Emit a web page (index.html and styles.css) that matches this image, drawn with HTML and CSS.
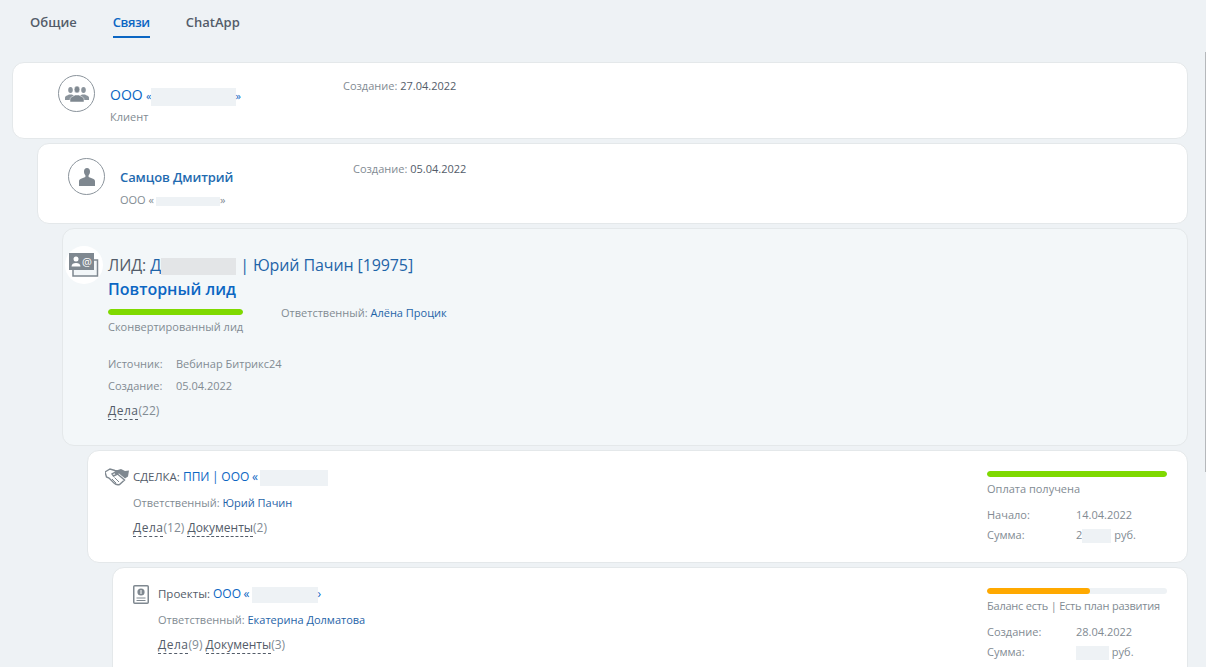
FILE: index.html
```html
<!DOCTYPE html>
<html lang="ru">
<head>
    <meta charset="UTF-8">
    <title>Связи</title>
    <link rel="stylesheet" href="styles.css">
</head>
<body>
    <div class="scroll-thumb"></div>

    <nav class="tabs">
        <a class="tab">Общие</a>
        <a class="tab tab-active">Связи</a>
        <a class="tab">ChatApp</a>
    </nav>

    <div class="tree">
        <!-- Клиент -->
        <section class="card card-client level-0">
            <div class="avatar">
                <svg viewBox="0 0 24 16" width="24" height="16">
                    <ellipse cx="5.500" cy="4" rx="2.300" ry="3" fill="#8b949c"/>
                    <ellipse cx="18.500" cy="4" rx="2.300" ry="3" fill="#8b949c"/>
                    <path d="M0 14v-2.500c0-1.500 2.500-2 4-3h3l3 2v3.500zM24 14v-2.500c0-1.500-2.500-2-4-3h-3l-3 2v3.500z" fill="#8b949c"/>
                    <ellipse cx="12" cy="3.500" rx="2.800" ry="3.500" fill="#7f8890" stroke="#fff" stroke-width=".5"/>
                    <path d="M5 16v-3c0-2 3.500-2.500 5-4h4c1.500 1.500 5 2 5 4v3z" fill="#7f8890" stroke="#fff" stroke-width=".5"/>
                </svg>
            </div>
            <div class="who">
                <div class="who-name"><a class="link link-org">ООО</a> <a class="link small">«<span class="blur blur-a"></span>»</a></div>
                <div class="who-sub">Клиент</div>
            </div>
            <div class="created">Создание: <b>27.04.2022</b></div>
        </section>

        <!-- Контакт -->
        <section class="card card-contact level-1">
            <div class="avatar">
                <svg viewBox="0 0 16 18" width="16" height="18">
                    <path d="M8 0c1.900 0 3 1.400 3 3.500 0 1.700-.6 3-1.400 3.800v1.700l4.400 1.800c1.300.6 2 1.400 2 2.700v4.500H0v-4.500c0-1.300.7-2.100 2-2.700l4.400-1.800V7.300C5.600 6.500 5 5.200 5 3.500 5 1.400 6.100 0 8 0z" fill="#7f8890"/>
                </svg>
            </div>
            <div class="who">
                <div class="who-name"><a class="link link-bold">Самцов Дмитрий</a></div>
                <div class="who-sub">ООО «<span class="blur blur-b"></span>»</div>
            </div>
            <div class="created">Создание: <b>05.04.2022</b></div>
        </section>

        <!-- Лид -->
        <section class="card card-lead level-2">
            <div class="lead-icon">
                <svg viewBox="0 0 30 24" width="30" height="24">
                    <path d="M4 7h24.500v16H4z" fill="#f3f7f9" stroke="#7f8890" stroke-width="1.500"/>
                    <rect x="0" y="0" width="25" height="17" fill="#7f8890"/>
                    <circle cx="7" cy="6" r="2.500" fill="#fff"/>
                    <path d="M2.500 13.500c0-2.500 2-3.500 4.500-3.500s4.500 1 4.500 3.500z" fill="#fff"/>
                    <text class="lead-at" x="13" y="13">@</text>
                </svg>
            </div>
            <div class="lead-body">
                <h2 class="lead-title">ЛИД: <a class="link-dark">Д<span class="blur blur-c"></span> | Юрий Пачин [19975]</a></h2>
                <div class="lead-repeat">Повторный лид</div>
                <div class="lead-status">
                    <div class="status-col">
                        <div class="bar"><div class="bar-fill bar-green" style="width: 100%"></div></div>
                        <div class="status-text">Сконвертированный лид</div>
                    </div>
                    <div class="owner">Ответственный: <a class="link-dark">Алёна Процик</a></div>
                </div>
                <dl class="facts">
                    <div class="fact"><dt>Источник:</dt><dd>Вебинар Битрикс24</dd></div>
                    <div class="fact"><dt>Создание:</dt><dd>05.04.2022</dd></div>
                </dl>
                <div class="actions"><span class="dashed">Дела</span><span class="count">(22)</span></div>
            </div>
        </section>

        <!-- Сделка -->
        <section class="card card-deal level-3">
            <svg class="deal-icon" viewBox="0 0 24 18" width="24" height="18">
                <path d="M0 4l5-3 5 1.500 2 .5-5 3 1.500 2 4-2 7 6-5 4.500c-2 .5-4 0-5.500-1.500L4 10 1.500 9z" fill="#fff" stroke="#7f8890" stroke-width="1.400"/>
                <path d="M11 2.500l5-1.500 4 2 4-.5-1 6-3 2-6-5-3 1.500-1.500-1.500z" fill="#7f8890"/>
                <path d="M7 11l4 4M9.500 9.500l4.500 4.500" stroke="#7f8890" stroke-width="1"/>
            </svg>
            <div class="deal-body">
                <div class="deal-title">СДЕЛКА: <a class="link link-title">ППИ | ООО «<span class="blur blur-d"></span></a></div>
                <div class="owner">Ответственный: <a class="link-dark">Юрий Пачин</a></div>
                <div class="actions"><span class="dashed">Дела</span><span class="count">(12)</span> <span class="dashed">Документы</span><span class="count">(2)</span></div>
            </div>
            <div class="deal-side">
                <div class="bar"><div class="bar-fill bar-green" style="width: 100%"></div></div>
                <div class="status-text">Оплата получена</div>
                <dl class="side-facts">
                    <div class="fact"><dt>Начало:</dt><dd>14.04.2022</dd></div>
                    <div class="fact"><dt>Сумма:</dt><dd>2<span class="blur blur-e"></span> руб.</dd></div>
                </dl>
            </div>
        </section>

        <!-- Проект -->
        <section class="card card-project level-4">
            <svg class="project-icon" viewBox="0 0 16 19" width="16" height="19">
                <rect x=".75" y=".75" width="14.500" height="17.500" rx="1" fill="#fff" stroke="#7f8890" stroke-width="1.500"/>
                <circle cx="8" cy="7" r="3.600" fill="#7f8890"/>
                <path d="M8 5v4" stroke="#fff" stroke-width="1"/>
                <path d="M3.500 13h9M3.500 15.500h9" stroke="#7f8890" stroke-width="1"/>
            </svg>
            <div class="deal-body">
                <div class="deal-title">Проекты: <a class="link link-title">ООО «<span class="blur blur-f"></span>›</a></div>
                <div class="owner">Ответственный: <a class="link-dark">Екатерина Долматова</a></div>
                <div class="actions"><span class="dashed">Дела</span><span class="count">(9)</span> <span class="dashed">Документы</span><span class="count">(3)</span></div>
            </div>
            <div class="deal-side">
                <div class="bar"><div class="bar-fill bar-orange" style="width: 57%"></div></div>
                <div class="status-text status-tight">Баланс есть | Есть план развития</div>
                <dl class="side-facts">
                    <div class="fact"><dt>Создание:</dt><dd>28.04.2022</dd></div>
                    <div class="fact"><dt>Сумма:</dt><dd><span class="blur blur-g"></span> руб.</dd></div>
                    <div class="fact"><dt>Закрытие:</dt><dd>30.04.2022</dd></div>
                </dl>
            </div>
        </section>
    </div>
</body>
</html>
```

FILE: styles.css
```css
html, body {
    height: 100%;
    overflow: hidden;
}

body {
    margin: 0;
    background-color: #eef2f5;
    font-family: "Open Sans", "Noto Sans", Arial, sans-serif;
    font-size: 11px;
    color: #828b93;
}

a {
    text-decoration: none;
}

/* Полоса прокрутки поверх страницы */
.scroll-thumb {
    position: fixed;
    top: 52px;
    right: 0;
    width: 1px;
    height: 420px;
    background-color: #b5b8bb;
}

/* Вкладки */
.tabs {
    display: flex;
    gap: 36px;
    padding: 13px 0 0 30px;
    height: 25px;
}

.tab {
    height: 25px;
    font-size: 13px;
    line-height: 18px;
    font-weight: 600;
    color: #535c69;
    box-sizing: border-box;
}

.tab-active {
    color: #0b66c3;
    letter-spacing: -0.4px;
    border-bottom: 2px solid #0b66c3;
}

/* Дерево связей */
.tree {
    display: flex;
    flex-direction: column;
    gap: 4px;
    margin-top: 24px;
    margin-right: 18px;
}

.card {
    display: flex;
    background-color: #ffffff;
    border: 1px solid #e4e8ea;
    border-radius: 12px;
    box-sizing: border-box;
}

.level-0 { margin-left: 12px; }
.level-1 { margin-left: 37px; }
.level-2 { margin-left: 62px; }
.level-3 { margin-left: 87px; }
.level-4 { margin-left: 112px; }

.card-client {
    height: 77px;
    padding: 12px 0 0 45px;
}

.card-contact {
    height: 81px;
    padding: 14px 0 0 30px;
}

.avatar {
    display: flex;
    align-items: center;
    justify-content: center;
    flex: none;
    width: 37px;
    height: 37px;
    border: 1px solid #8b949c;
    border-radius: 50%;
    box-sizing: border-box;
}

.who {
    width: 233px;
    flex: none;
    margin-left: 15px;
    padding-top: 11px;
}

.who-name {
    height: 17px;
    font-size: 13px;
    line-height: 17px;
}

.who-sub {
    margin-top: 6px;
    line-height: 15px;
}

.created {
    line-height: 15px;
    margin-top: 3px;
}

.created b {
    font-weight: 400;
    color: #535c69;
}

.link {
    color: #0b66c3;
}

.link.small {
    font-size: 11px;
}

.link-org {
    font-size: 14px;
}

.link-bold {
    color: #1f6bb0;
    font-weight: 600;
    letter-spacing: -0.1px;
}

.link-title {
    font-size: 12px;
    word-spacing: -0.5px;
}

.link-dark {
    color: #1f64a8;
}

/* Размытые участки */
.blur {
    display: inline-block;
    height: 16px;
    vertical-align: middle;
    background-color: #eef2f5;
}

.blur-a { width: 85px; height: 18px; margin-left: -1px; }
.blur-b { width: 64px; height: 9px; margin-left: 2px; }
.blur-c { width: 75px; height: 17px; background-color: #e3e5e7; }
.blur-d { width: 68px; margin-left: 2px; }
.blur-e { width: 29px; height: 14px; }
.blur-f { width: 66px; margin-left: 2px; }
.blur-g { width: 33px; height: 14px; }

/* Лид */
.card-lead {
    height: 218px;
    padding: 17px 0 0 2px;
    background-color: #f3f7f9;
}

.lead-icon {
    display: flex;
    align-items: center;
    justify-content: center;
    flex: none;
    width: 38px;
    height: 38px;
    border-radius: 50%;
    background-color: #ffffff;
}

.lead-at {
    font-size: 11px;
    fill: #ffffff;
}

.lead-body {
    margin-left: 5px;
}

.lead-title {
    margin: 9px 0 0;
    font-size: 16px;
    line-height: 20px;
    font-weight: 500;
    letter-spacing: -0.1px;
    color: #535c69;
}

.lead-repeat {
    margin-top: 4px;
    font-size: 16px;
    line-height: 20px;
    font-weight: 600;
    color: #0b66c3;
}

.lead-status {
    display: flex;
    gap: 38px;
    margin-top: 10px;
}

.status-col {
    width: 135px;
    white-space: nowrap;
}

.lead-status .owner {
    margin-top: -4px;
}

.bar {
    height: 6px;
    border-radius: 3px;
    background-color: #eef2f5;
    overflow: hidden;
}

.bar-fill {
    height: 100%;
    border-radius: 3px;
}

.bar-green {
    background-color: #7fd900;
}

.bar-orange {
    background-color: #ffa900;
}

.status-text {
    margin-top: 4px;
    line-height: 15px;
}

.status-tight {
    letter-spacing: -0.22px;
}

.facts {
    margin: 22px 0 0;
}

.fact {
    display: flex;
    line-height: 15px;
    margin-bottom: 7px;
}

dt {
    width: 68px;
    flex: none;
}

dd {
    margin: 0;
}

.actions {
    font-size: 12px;
    line-height: 16px;
    color: #828b93;
}

.facts + .actions {
    margin-top: 10px;
}

.dashed {
    color: #535c69;
    border-bottom: 1px dashed #535c69;
}

.dashed:first-child {
    letter-spacing: 0.5px;
}

/* Сделка и проект */
.card-deal {
    height: 113px;
    padding: 17px 20px 0 17px;
}

.card-project {
    height: 130px;
    padding: 17px 20px 0 20px;
}

.deal-icon {
    flex: none;
    margin-right: 4px;
}

.project-icon {
    flex: none;
    margin-right: 9px;
}

.deal-body {
    flex: 1;
}

.deal-title {
    font-size: 11.500px;
    line-height: 18px;
    color: #535c69;
}

.deal-body .owner {
    margin-top: 9px;
    line-height: 15px;
}

.deal-body .actions {
    margin-top: 10px;
}

.deal-side {
    flex: none;
    width: 180px;
    margin-top: 3px;
}

.side-facts {
    margin: 11px 0 0;
}

.side-facts .fact {
    margin-bottom: 5px;
}

.side-facts dt {
    width: 89px;
}
```
